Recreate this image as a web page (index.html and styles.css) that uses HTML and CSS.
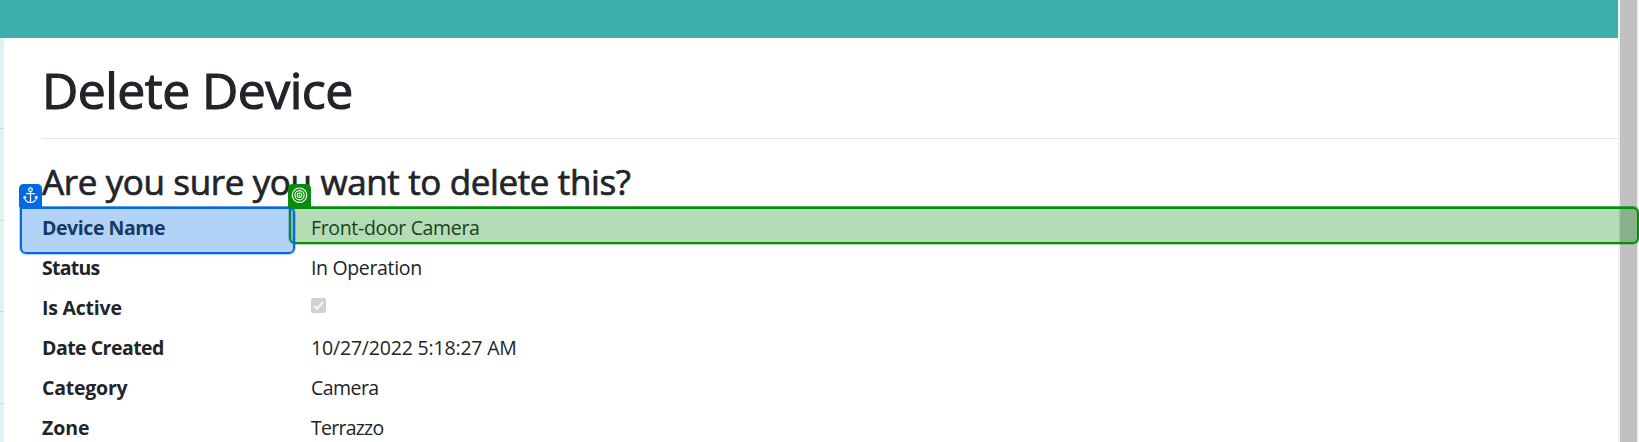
FILE: index.html
```html
<!DOCTYPE html>
<html lang="en">
<head>
<meta charset="utf-8">
<title>Delete Device</title>
<link rel="stylesheet" href="styles.css">
</head>
<body>
<div class="app">
  <div class="page">
    <header class="topbar"></header>
    <div class="body">
      <aside class="sidebar"></aside>
      <main class="content">
        <h1 class="title">Delete Device</h1>
        <hr class="rule">
        <h3 class="question">Are you sure you want to delete this?</h3>
        <dl class="details">
          <dt><span class="t-name">Device Name</span></dt><dd><span class="v-name">Front-door Camera</span></dd>
          <dt><span class="t-status">Status</span></dt><dd><span class="v-status">In Operation</span></dd>
          <dt><span class="t-active">Is Active</span></dt>
          <dd><svg class="check" viewBox="0 0 15 15"><rect width="15" height="15" rx="2" fill="#d1d1d1"/><path d="M2.9 7.8 6 10.9 12.2 3.6" fill="none" stroke="#f5f5f5" stroke-width="2.2"/></svg></dd>
          <dt><span class="t-date">Date Created</span></dt><dd><span class="v-date">10/27/2022 5:18:27 AM</span></dd>
          <dt><span class="t-category">Category</span></dt><dd><span class="v-category">Camera</span></dd>
          <dt><span class="t-zone">Zone</span></dt><dd><span class="v-zone">Terrazzo</span></dd>
        </dl>
      </main>
    </div>
  </div>
  <div class="scrollbar"></div>
  <div class="mark mark-target"></div>
  <div class="mark mark-anchor"></div>
  <svg class="badge badge-anchor" viewBox="0 0 23 23"><path d="M0 23V5Q0 0 5 0H18Q23 0 23 5V23Z" fill="#0369e3"/><g fill="none" stroke="#fff" stroke-width="1.2"><circle cx="11.5" cy="5.7" r="1.8"/><path d="M11.5 7.5V18.5M7 9.6H16M5.4 12.5Q5.8 18.5 11.5 18.5T17.6 12.5M4.8 14.7 5.3 12.4 7.4 13.6M18.2 14.7 17.7 12.4 15.6 13.6"/></g></svg>
  <svg class="badge badge-target" viewBox="0 0 23 23"><path d="M0 23V5Q0 0 5 0H18Q23 0 23 5V23Z" fill="#078c0b"/><g fill="none" stroke="#fff" stroke-width="1.15"><circle cx="11.5" cy="11.2" r="7.2"/><circle cx="11.5" cy="11.2" r="4.6"/><circle cx="11.5" cy="11.2" r="2.2"/></g><circle cx="11.5" cy="11.2" r=".7" fill="#fff"/></svg>
</div>
</body>
</html>
```
FILE: styles.css
```css
* { box-sizing: border-box; }
body {
  margin: 0;
  overflow: hidden;
  background: #fff;
  color: #212529;
  font-family: "Open Sans", "Noto Sans", sans-serif;
  font-size: 19.5px;
  line-height: 30px;
}
.app { position: relative; display: flex; width: 1639px; height: 442px; overflow: hidden; }
.page { flex: 1; display: flex; flex-direction: column; }
.topbar { height: 38px; flex: none; background: #3cafaa; }
.body { flex: 1; display: flex; min-height: 0; }
.sidebar {
  width: 4px;
  background: repeating-linear-gradient(#def3f2 0 90.4px, #c6dcda 90.4px 91.4px);
}
.content { flex: 1; padding: 22px 0 0 38px; }
.title { margin: 0; font-size: 50px; line-height: 60px; font-weight: 500; letter-spacing: -0.55px; white-space: nowrap; -webkit-text-stroke: 1.1px #212529; }
.rule { margin: 18px 0 0; border: 0; height: 1px; background: #e3e4e5; }
.question { margin: 22px 0 0; font-size: 35px; line-height: 42px; font-weight: 500; letter-spacing: -0.37px; white-space: nowrap; -webkit-text-stroke: 0.7px #212529; }
.details { margin: 10px 0 0; display: grid; grid-template-columns: 269px 1fr; grid-auto-rows: 30px; row-gap: 10px; }
.details dt { font-weight: 700; white-space: nowrap; }
.details dd { margin: 0; white-space: nowrap; }
.t-name { letter-spacing: -0.43px; }
.t-status { letter-spacing: -0.75px; }
.t-active, .t-category { letter-spacing: -0.22px; }
.t-date { letter-spacing: -0.52px; }
.t-zone { letter-spacing: -0.1px; }
.v-name, .v-status { letter-spacing: -0.34px; }
.v-date { letter-spacing: -0.18px; }
.v-category { letter-spacing: -0.55px; }
.v-zone { letter-spacing: -0.75px; }
.check { display: block; width: 15px; height: 15px; margin-top: 5px; }
.scrollbar { width: 21px; background: #c1c1c1; border: solid #f1f1f1; border-width: 0 2px; }
.mark { position: absolute; border: 2px solid; border-radius: 0 6px 6px 6px; }
.mark-anchor { left: 20px; top: 207px; width: 275px; height: 47px; border-color: #0369e3; background: rgba(3, 105, 227, .3); box-shadow: 0 0 0 1px rgba(3, 105, 227, .3), 0 -1px 0 rgba(3, 105, 227, .5); }
.mark-target { left: 289px; top: 207px; width: 1350px; height: 37px; border-color: #078c0b; background: rgba(7, 140, 11, .3); box-shadow: 0 0 0 1px rgba(7, 140, 11, .3), 0 -1px 0 rgba(7, 140, 11, .6); }
.badge { position: absolute; top: 184px; width: 23px; height: 23px; }
.badge-anchor { left: 19px; }
.badge-target { left: 288px; }
```
